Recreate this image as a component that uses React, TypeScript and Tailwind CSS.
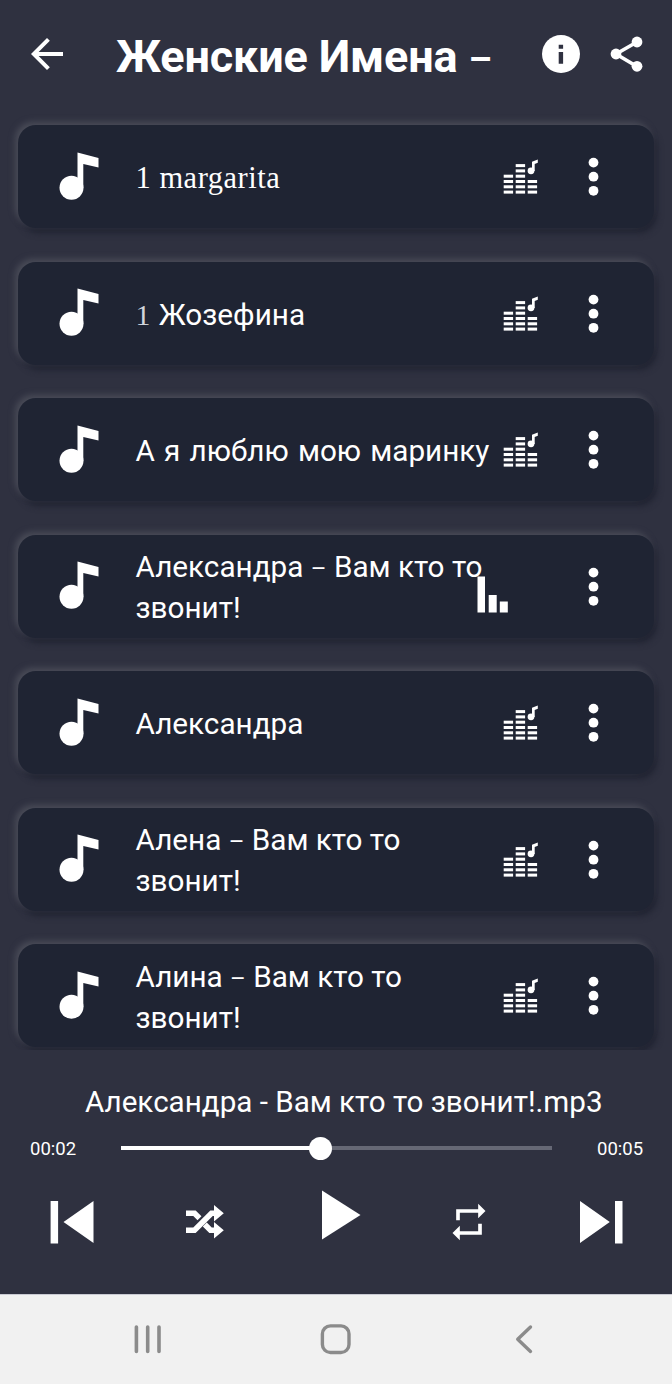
import type { ReactNode } from "react";

type Track = {
  id: number;
  lines: ReactNode[];
  playing?: boolean;
};

const Dash = () => <span className="text-[24px]">–</span>;

const tracks: Track[] = [
  {
    id: 1,
    lines: [
      <span className="font-['Liberation_Serif',serif] text-[30.5px] tracking-[0.5px]">
        1 margarita
      </span>,
    ],
  },
  {
    id: 2,
    lines: [
      <>
        <span className="mr-px font-['Liberation_Serif',serif] text-gray-300">1</span>{" "}
        Жозефина
      </>,
    ],
  },
  {
    id: 3,
    lines: [<span className="[word-spacing:1.8px]">А я люблю мою маринку</span>],
  },
  {
    id: 4,
    lines: [<>Александра <Dash /> Вам кто то</>, "звонит!"],
    playing: true,
  },
  { id: 5, lines: ["Александра"] },
  { id: 6, lines: [<>Алена <Dash /> Вам кто то</>, "звонит!"] },
  { id: 7, lines: [<>Алина <Dash /> Вам кто то</>, "звонит!"] },
];

const NoteIcon = () => (
  <svg width="40" height="50" viewBox="0 0 40 50" fill="currentColor">
    <circle cx="12.5" cy="35.7" r="12" />
    <path d="M18.5 0.5 39.5 6v9.5L24.3 12V36h-5.8z" />
  </svg>
);

const EqualizerIcon = () => (
  <svg width="36" height="36" viewBox="0 0 36 36" fill="currentColor">
    {[4, 6, 3].map((count, col) =>
      Array.from({ length: count }, (_, row) => (
        <rect
          key={`${col}-${row}`}
          x={0.7 + col * 12}
          y={31.6 - row * 5.3}
          width="9.4"
          height="3"
        />
      )),
    )}
    <circle cx="28" cy="11.8" r="3.4" />
    <path d="M29 12V2.8l5.8-2.4v3.4l-3.1 1.2V12z" />
  </svg>
);

const PlayingBars = () => (
  <svg width="31" height="37" viewBox="0 0 31 37" fill="currentColor">
    <rect x="0.5" y="0.5" width="7.5" height="36" />
    <rect x="11.7" y="19" width="8" height="17.5" />
    <rect x="22.8" y="25.5" width="8" height="11" />
  </svg>
);

const DotsIcon = () => (
  <svg width="11" height="40" viewBox="0 0 11 40" fill="currentColor">
    <circle cx="5.5" cy="5.6" r="4.9" />
    <circle cx="5.5" cy="19.7" r="4.9" />
    <circle cx="5.5" cy="33.8" r="4.9" />
  </svg>
);

const TrackCard = ({ track }: { track: Track }) => {
  return (
    <div className="relative flex h-[103px] shrink-0 items-center rounded-[18px] bg-[#1f2433] pl-[41px] shadow-[-3px_-3px_6px_#4a4c58,3px_5px_6px_#212432]">
      <NoteIcon />
      <div className="ml-[36.5px] w-[367px] whitespace-nowrap pt-[2px] text-[29.7px] leading-[41px]">
        {track.lines.map((line, i) => (
          <div key={i} className="h-[41px]">
            {line}
          </div>
        ))}
      </div>
      {track.playing ? (
        <div className="absolute left-[459px] top-[41px]">
          <PlayingBars />
        </div>
      ) : (
        <div className="pt-px">
          <EqualizerIcon />
        </div>
      )}
      <div className="absolute left-[570px] top-[32px]">
        <DotsIcon />
      </div>
    </div>
  );
};

const Header = () => (
  <header className="flex h-[109px] shrink-0 pl-[23px]">
    <svg className="mt-[30px]" width="48" height="48" viewBox="0 0 24 24" fill="currentColor">
      <path d="M20 11H7.83l5.59-5.59L12 4l-8 8 8 8 1.41-1.41L7.83 13H20v-2z" />
    </svg>
    <h1 className="ml-[45px] mt-[30px] w-[422px] whitespace-nowrap text-[45px] font-bold leading-[54px] tracking-[-0.15px]">
      Женские Имена <span className="text-[37px]">–</span>
    </h1>
    <svg className="mt-[31px]" width="46" height="46" viewBox="0 0 24 24">
      <circle cx="12" cy="12" r="9.9" fill="currentColor" />
      <path d="M10.8 7.2h2.3v2.1h-2.3zM10.8 11h2.3v6.1h-2.3z" fill="#2f3140" />
    </svg>
    <svg className="ml-[22px] mt-[32px]" width="44" height="44" viewBox="0 0 44 44" fill="currentColor">
      <path d="M31 10 10 22l21 12.5" fill="none" stroke="currentColor" strokeWidth="3.6" />
      <circle cx="31" cy="10" r="5.4" />
      <circle cx="10" cy="22" r="5.4" />
      <circle cx="31" cy="34.3" r="5.4" />
    </svg>
  </header>
);

const Player = () => (
  <section className="flex grow flex-col">
    <div className="mt-[34px] whitespace-nowrap pl-[85px] text-[29.6px] leading-[36px]">
      Александра - Вам кто то звонит!.mp3
    </div>
    <div className="mt-[16px] flex h-[24px] items-center text-[18.5px]">
      <span className="w-[121px] pl-[30px] pt-[3px]">00:02</span>
      <div className="relative h-[4px] w-[431px] bg-[#666875]">
        <div className="h-full w-[200px] bg-white" />
        <div className="absolute left-[188px] top-[-9.5px] size-[23px] rounded-full bg-white" />
      </div>
      <span className="ml-[45px] pt-[3px]">00:05</span>
    </div>
    <div className="mt-[29px] flex h-[54px] items-start pl-[50px]">
      <svg className="mt-[11px]" width="44" height="44" viewBox="0 0 44 44" fill="currentColor">
        <path d="M.6 1h7.5v42.5H.6zM43.5 1v42L13.5 22z" />
      </svg>
      <svg className="ml-[91px] mt-[15px]" width="40" height="36" viewBox="0 0 40 36" fill="currentColor">
        <path
          d="M1 9.3h8.5l5 5M1 26.3h8.5l17-17H31M19.8 20.6l5.7 5.7H31"
          fill="none"
          stroke="currentColor"
          strokeWidth="5.6"
        />
        <path d="M29 1v16.6l9.8-8.3zM29 18v16.6l9.8-8.3z" />
      </svg>
      <svg className="ml-[96px] mt-px" width="42" height="52" viewBox="0 0 42 52" fill="currentColor">
        <path d="M1 .5v49L39.5 25z" />
      </svg>
      <svg className="ml-[84px] mt-[11px]" width="44" height="44" viewBox="0 0 24 24" fill="currentColor">
        <path d="M7 7h10v3l4-4-4-4v3H5v6h2V7zm10 10H7v-3l-4 4 4 4v-3h12v-6h-2v4z" />
      </svg>
      <svg className="ml-[88px] mt-[11px]" width="44" height="44" viewBox="0 0 44 44" fill="currentColor">
        <path d="M1 1v42L30.8 22zM36 1h7.5v42.5H36z" />
      </svg>
    </div>
  </section>
);

const NavBar = () => (
  <nav className="flex h-[90px] shrink-0 border-t border-[#c9cad3] bg-[#f1f1f1] pl-[133px] pt-[29px] text-[#8b8b8b]">
    <svg width="30" height="32" viewBox="0 0 30 32" fill="none" stroke="currentColor" strokeWidth="3.6" strokeLinecap="round">
      <path d="M3.4 3v24.5M14.7 3v24.5M26 3v24.5" />
    </svg>
    <svg className="ml-[157px]" width="32" height="32" viewBox="0 0 32 32" fill="none" stroke="currentColor" strokeWidth="3.4">
      <rect x="2.4" y="1.9" width="26.6" height="26.6" rx="8" />
    </svg>
    <svg className="ml-[162px]" width="22" height="32" viewBox="0 0 22 32" fill="none" stroke="currentColor" strokeWidth="3.4" strokeLinecap="round" strokeLinejoin="round">
      <path d="M16.5 3 3.7 15.2 16.5 27.4" />
    </svg>
  </nav>
);

export default function App() {
  return (
    <div className="flex h-[1384px] w-[672px] flex-col overflow-hidden bg-[#2f3140] font-[Roboto,sans-serif] text-white">
      <Header />
      <main className="flex h-[941px] shrink-0 flex-col gap-[33.5px] overflow-hidden pl-[18px] pr-[18px] pt-[16px]">
        {tracks.map((track) => (
          <TrackCard key={track.id} track={track} />
        ))}
      </main>
      <Player />
      <NavBar />
    </div>
  );
}
